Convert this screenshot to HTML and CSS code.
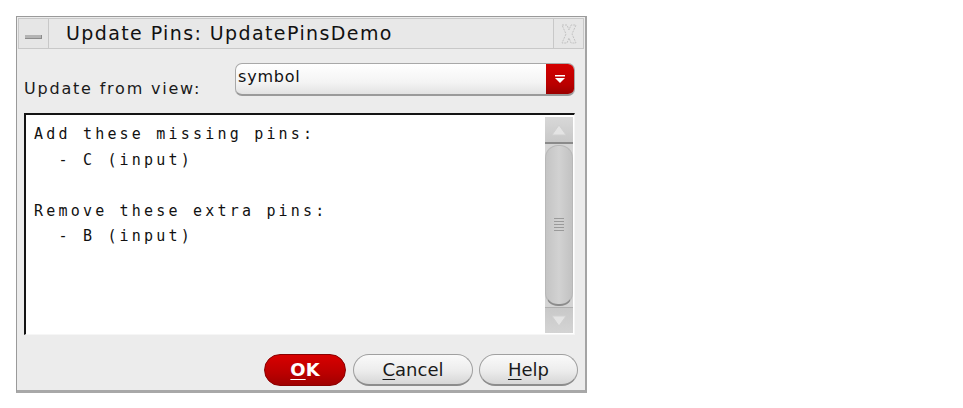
FILE: index.html
```html
<!DOCTYPE html>
<html>
<head>
<meta charset="utf-8">
<link rel="stylesheet" href="styles.css">
</head>
<body>
<div class="page">
  <div class="window">
    <div class="titlebar">
      <div class="tb-btn"><span class="min-glyph"></span></div>
      <div class="tb-title">Update Pins: UpdatePinsDemo</div>
      <div class="tb-btn">
        <svg width="18" height="22" viewBox="0 0 18 22"><path d="M2 2 L7 2 L9 7 L11 2 L16 2 L12 11 L16 20 L11 20 L9 15 L7 20 L2 20 L6 11 Z" fill="none" stroke="#c2c2c2" stroke-width="1" stroke-dasharray="2 1"/></svg>
      </div>
    </div>
    <div class="content">
      <div class="view-row">
        <label class="view-label">Update from view:</label>
        <div class="dropdown">
          <span class="dd-text">symbol</span>
          <span class="dd-btn">
            <svg width="12" height="9" viewBox="0 0 12 9"><rect x="1" y="0" width="10" height="1.5" fill="#fff"/><path d="M1 3 L11 3 L6 8 Z" fill="#fff"/></svg>
          </span>
        </div>
      </div>
      <div class="textarea">
        <pre class="text">Add these missing pins:
  - C (input)

Remove these extra pins:
  - B (input)</pre>
        <div class="scrollbar">
          <div class="sb-arrow sb-up">
            <svg width="16" height="12" viewBox="0 0 16 12"><path d="M8 1 L15 11 L1 11 Z" fill="#e4e4e4" stroke="#d0d0d0"/></svg>
          </div>
          <div class="sb-track">
            <div class="sb-thumb">
              <span class="grip"></span>
            </div>
          </div>
          <div class="sb-arrow sb-down">
            <svg width="16" height="12" viewBox="0 0 16 12"><path d="M8 11 L15 1 L1 1 Z" fill="#e4e4e4" stroke="#d0d0d0"/></svg>
          </div>
        </div>
      </div>
      <div class="buttons">
        <button class="btn btn-ok"><u>O</u>K</button>
        <button class="btn btn-cancel"><u>C</u>ancel</button>
        <button class="btn btn-help"><u>H</u>elp</button>
      </div>
    </div>
  </div>
</div>
</body>
</html>
```

FILE: styles.css
```css
html, body {
  margin: 0;
  padding: 0;
  background: #ffffff;
}

.page {
  padding: 16px 0 0 16px;
}

.window {
  width: 571px;
  height: 377px;
  box-sizing: border-box;
  border: 1px solid #9a9a9a;
  border-right: 2px solid #a4a4a4;
  border-bottom: 3px solid #a8a8a8;
  background: #ececec;
  font-family: "DejaVu Sans", sans-serif;
  color: #1a1a1a;
}

.titlebar {
  display: flex;
  height: 31px;
  margin: 1px 1px 0 1px;
  background: #e8e8e8;
}

.tb-btn {
  width: 31px;
  box-sizing: border-box;
  border: 1px solid #c8c8c8;
  display: flex;
  align-items: center;
  justify-content: center;
  background: #e6e6e6;
}

.min-glyph {
  width: 16px;
  height: 3px;
  margin-top: 6px;
  background: #b4b4b4;
  border-bottom: 1px solid #8c8c8c;
  border-right: 1px solid #8c8c8c;
}

.tb-title {
  flex: 1;
  box-sizing: border-box;
  border: 1px solid #c8c8c8;
  border-left: none;
  border-right: none;
  padding-left: 17px;
  font-size: 19px;
  line-height: 29px;
  letter-spacing: 1.4px;
  color: #111;
  white-space: nowrap;
}

.content {
  padding: 0 10px 0 7px;
}

.view-row {
  display: flex;
  align-items: flex-end;
  margin-top: 14px;
}

.view-label {
  width: 211px;
  font-size: 16px;
  letter-spacing: 1.8px;
  line-height: 20px;
  margin-bottom: -3px;
  color: #1a1a1a;
}

.dropdown {
  flex: 1;
  height: 33px;
  box-sizing: border-box;
  display: flex;
  border: 1px solid #a8a8a8;
  border-bottom: 2px solid #9a9a9a;
  border-radius: 7px;
  background: linear-gradient(#ffffff, #f4f4f4 60%, #e2e2e2);
  overflow: hidden;
}

.dd-text {
  flex: 1;
  padding-left: 2px;
  font-size: 16px;
  line-height: 26px;
  letter-spacing: 0.8px;
  color: #111;
}

.dd-btn {
  width: 28px;
  display: flex;
  align-items: center;
  justify-content: center;
  background: linear-gradient(#d40000, #b80000 70%, #9a0000);
}

.textarea {
  margin-top: 17px;
  height: 222px;
  box-sizing: border-box;
  border-top: 2px solid #141414;
  border-left: 2px solid #141414;
  border-right: 1px solid #f6f6f6;
  border-bottom: 1px solid #f6f6f6;
  background: #ffffff;
  display: flex;
}

.text {
  flex: 1;
  margin: 0;
  padding: 7px 0 0 8px;
  font-family: "DejaVu Sans Mono", monospace;
  font-size: 15px;
  line-height: 25.5px;
  letter-spacing: 3.2px;
  color: #111;
}

.scrollbar {
  width: 28px;
  margin: 2px 1px 1px 0;
  display: flex;
  flex-direction: column;
  background: #d6d6d6;
}

.sb-arrow {
  height: 25px;
  display: flex;
  align-items: center;
  justify-content: center;
  background: linear-gradient(#d8d8d8, #c8c8c8);
}

.sb-up {
  border-bottom: 2px solid #8a8a8a;
}

.sb-down {
  border-top: 1px solid #b0b0b0;
  background: linear-gradient(#c8c8c8, #d4d4d4);
}

.sb-track {
  flex: 1;
  padding: 1px 0;
  display: flex;
  background: #d4d4d4;
}

.sb-thumb {
  flex: 1;
  border-radius: 13px;
  border: 1px solid #b8b8b8;
  border-bottom: 2px solid #8c8c8c;
  background: linear-gradient(90deg, #c4c4c4, #d2d2d2 50%, #c2c2c2);
  display: flex;
  align-items: center;
  justify-content: center;
}

.grip {
  width: 10px;
  height: 14px;
  background: repeating-linear-gradient(#9a9a9a 0 1px, transparent 1px 3px);
}

.buttons {
  display: flex;
  justify-content: flex-end;
  gap: 6px;
  margin-top: 19px;
  margin-right: -3px;
}

.btn {
  height: 32px;
  box-sizing: border-box;
  border-radius: 16px;
  font-family: "DejaVu Sans", sans-serif;
  font-size: 18px;
  line-height: 28px;
  padding: 0;
  cursor: default;
}

.btn u {
  text-underline-offset: 3px;
}

.btn-ok {
  width: 82px;
  margin-right: 1px;
  border: 1px solid #8a0000;
  background: linear-gradient(#d80000, #bb0000 60%, #a00000);
  color: #ffffff;
  font-weight: bold;
}

.btn-cancel {
  width: 120px;
  border: 1px solid #a0a0a0;
  border-bottom: 2px solid #8c8c8c;
  background: linear-gradient(#fafafa, #ececec 55%, #d6d6d6);
  color: #1a1a1a;
}

.btn-help {
  width: 99px;
  border: 1px solid #a0a0a0;
  border-bottom: 2px solid #8c8c8c;
  background: linear-gradient(#fafafa, #ececec 55%, #d6d6d6);
  color: #1a1a1a;
}
```
